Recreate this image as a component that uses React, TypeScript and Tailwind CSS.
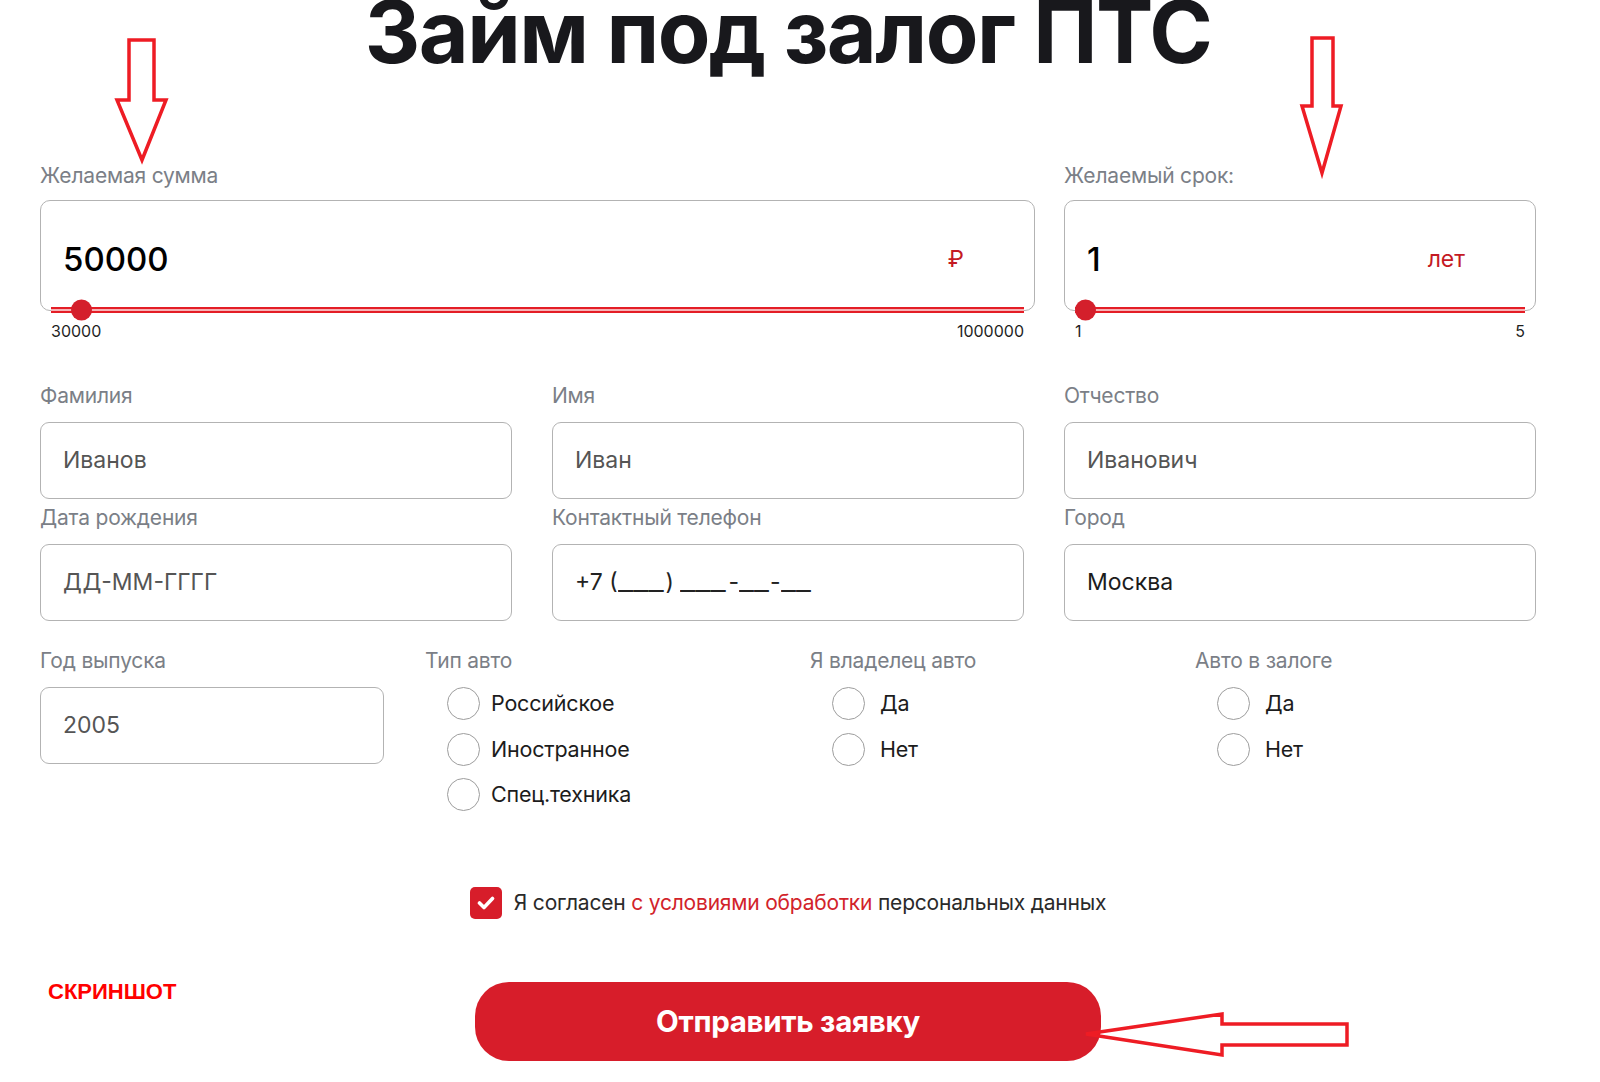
import React from 'react';

const LABEL = "block text-[21px] leading-[24px] text-[#7b7f87] tracking-[-0.2px]";
const BOX = "h-[77px] rounded-[9px] border border-[#b3b3b3] flex items-center pl-[22px] text-[23px]";

interface FieldProps {
  label: string;
  value: React.ReactNode;
  color?: string;
  className?: string;
}

const Field: React.FC<FieldProps> = ({ label, value, color = 'text-[#555]', className = '' }) => (
  <div className={className}>
    <span className={LABEL}>{label}</span>
    <div className={`mt-[14px] ${BOX} ${color}`}>{value}</div>
  </div>
);

interface RangeProps {
  label: string;
  value: string;
  unit: string;
  min: string;
  max: string;
  pct: number;
}

/** Value box with a thin red slider sitting on its bottom edge */
const RangeField: React.FC<RangeProps> = ({ label, value, unit, min, max, pct }) => (
  <div>
    <span className={LABEL}>{label}</span>
    <div className="mt-[12px] h-[111px] rounded-[10px] border border-[#b3b3b3] flex items-center justify-between pl-[22px] pr-[70px] pt-[8px]">
      <span className="text-[33px] font-medium text-black">{value}</span>
      <span className="text-[23px] text-[#c41a24]">{unit}</span>
    </div>
    <div className="relative mx-[11px] -mt-[4px] h-[6px] bg-[#e41e26] flex flex-col justify-center">
      <div className="h-[1.5px] bg-[#f6b3b6]" />
      <div
        className="absolute top-1/2 -translate-y-1/2 w-[21px] h-[21px] rounded-full bg-[#d41f2b]"
        style={{ left: `calc((100% - 21px) * ${pct / 100})` }}
      />
    </div>
    <div className="mx-[11px] mt-[8px] flex justify-between text-[16px] leading-[20px] text-[#1f1f1f]">
      <span>{min}</span>
      <span>{max}</span>
    </div>
  </div>
);

const Radio: React.FC<{ text: string; gap?: string }> = ({ text, gap = 'gap-[11px]' }) => (
  <div className={`flex items-center ${gap} h-[33px]`}>
    <span className="w-[33px] h-[33px] rounded-full border-[1.5px] border-[#9d9d9d] bg-white" />
    <span className="text-[21.5px] text-[#1c1c1c] tracking-[-0.2px]">{text}</span>
  </div>
);

const RadioGroup: React.FC<{ label: string; options: string[]; gap?: string }> = ({ label, options, gap }) => (
  <div>
    <span className={LABEL}>{label}</span>
    <div className="mt-[14px] pl-[22px] flex flex-col gap-[12.5px]">
      {options.map((o) => (
        <Radio key={o} text={o} gap={gap} />
      ))}
    </div>
  </div>
);

// phone mask blanks: the original font draws the underscores as long solid lines
const Blank3 = () => (
  <span className="inline-block w-[48px]">
    <span className="inline-block origin-left scale-x-[1.45]">___</span>
  </span>
);
const Blank2 = () => (
  <span className="inline-block w-[31px]">
    <span className="inline-block origin-left scale-x-[1.42]">__</span>
  </span>
);

const phoneMask = (
  <span className="whitespace-nowrap">
    +7 (<Blank3 />) <Blank3 />-<Blank2 />-<Blank2 />
  </span>
);

export default function App() {
  return (
    <div className="relative w-full h-[1082px] overflow-hidden bg-white font-['Inter',sans-serif]">
      <div className="pl-[40px] pr-[64px]">
        <h1 className="-mt-[11px] text-center text-[86px] leading-none font-bold tracking-[-1.5px] text-[#18181c]">
          Займ под залог ПТС
        </h1>

        {/* sum + term */}
        <div className="mt-[89px] grid grid-cols-[995px_472px] gap-x-[29px]">
          <RangeField label="Желаемая сумма" value="50000" unit="₽" min="30000" max="1000000" pct={2.06} />
          <RangeField label="Желаемый срок:" value="1" unit="лет" min="1" max="5" pct={0} />
        </div>

        {/* personal data */}
        <div className="mt-[43px] grid grid-cols-[472px_472px_472px] gap-x-[40px] gap-y-[7px]">
          <Field label="Фамилия" value="Иванов" />
          <Field label="Имя" value="Иван" />
          <Field label="Отчество" value="Иванович" />
          <Field label="Дата рождения" value="ДД-ММ-ГГГГ" />
          <Field label="Контактный телефон" value={phoneMask} color="text-[#222]" />
          <Field label="Город" value="Москва" color="text-[#1c1c1c]" />
        </div>

        {/* car */}
        <div className="mt-[28px] grid grid-cols-[385px_385px_385px_385px] items-start">
          <Field label="Год выпуска" value="2005" className="w-[344px]" />
          <RadioGroup label="Тип авто" options={['Российское', 'Иностранное', 'Спец.техника']} />
          <RadioGroup label="Я владелец авто" options={['Да', 'Нет']} gap="gap-[15px]" />
          <RadioGroup label="Авто в залоге" options={['Да', 'Нет']} gap="gap-[15px]" />
        </div>

        {/* consent */}
        <div className="mt-[76px] flex justify-center items-center gap-[12px]">
          <span className="w-[32px] h-[32px] rounded-[5px] bg-[#d71d2a] flex items-center justify-center">
            <svg width="18" height="14" viewBox="0 0 18 14" fill="none">
              <polyline points="2.5,7 7,11.5 15.5,2.5" stroke="white" strokeWidth="3.6" strokeLinecap="round" strokeLinejoin="round" />
            </svg>
          </span>
          <span className="text-[21px] text-[#2a2a2a] tracking-[-0.2px]">
            Я согласен <span className="text-[#d2232a]">с условиями обработки</span> персональных данных
          </span>
        </div>

        <div className="relative mt-[63px] flex justify-center">
          <span className="absolute left-[8px] top-[-7px] text-[22px] font-bold text-[#ff0000] font-['Liberation_Sans',sans-serif]">
            СКРИНШОТ
          </span>
          <button
            type="button"
            className="w-[626px] h-[79px] rounded-[34px] bg-[#d71d2a] text-white text-[29.5px] font-bold tracking-[-0.3px]"
          >
            Отправить заявку
          </button>
        </div>
      </div>

      {/* red annotation arrows drawn over the page */}
      <svg className="absolute inset-0 pointer-events-none" width="1600" height="1082" viewBox="0 0 1600 1082">
        <g fill="none" stroke="#ee1c24" strokeWidth="3.5" strokeLinejoin="miter">
          <polygon points="129,40 154,40 154,100 166,100 142,160 117,100 129,100" />
          <polygon points="1312,38 1333,38 1333,106 1341,106 1322,173 1302,106 1312,106" />
          <polygon points="1086,1034 1222,1014 1222,1024 1347,1024 1347,1045 1222,1045 1222,1055" />
        </g>
      </svg>
    </div>
  );
}
